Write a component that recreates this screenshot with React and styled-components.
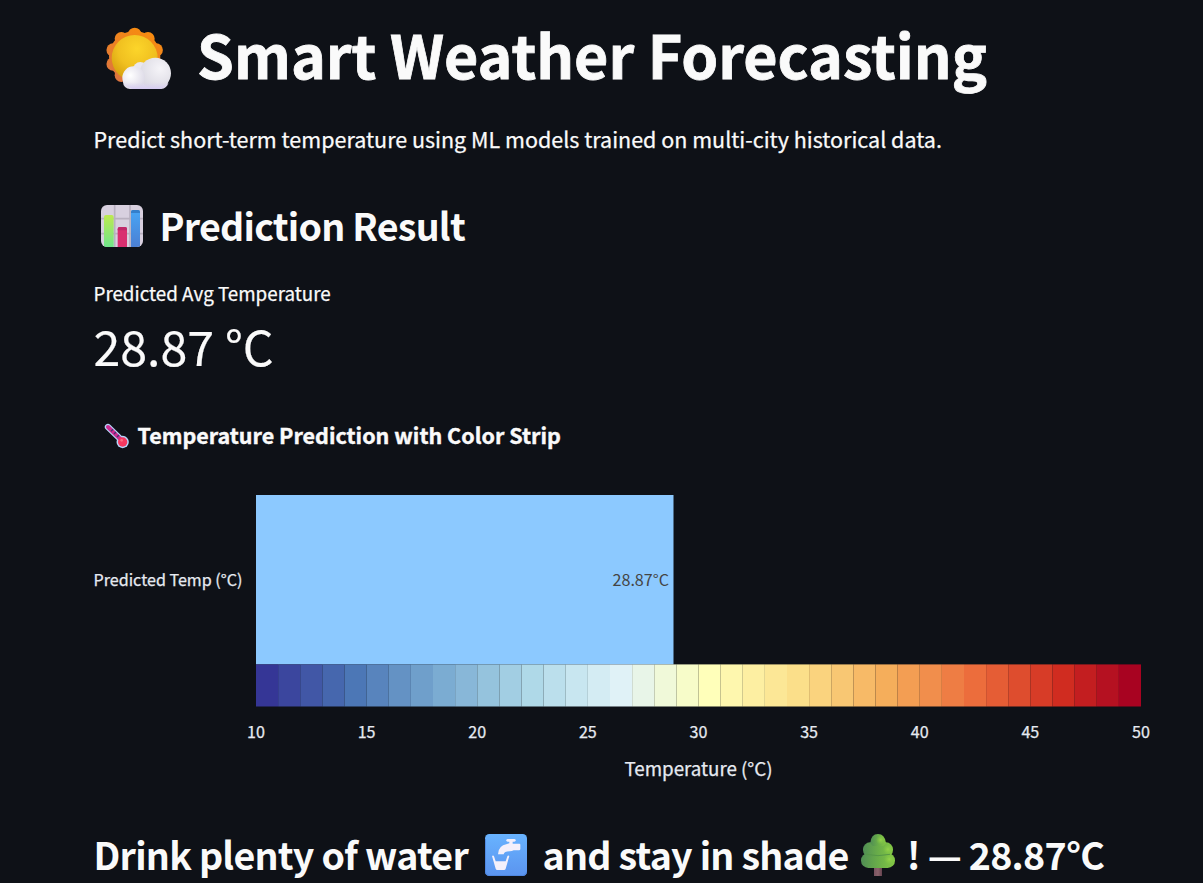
import React from "react";
import styled, { createGlobalStyle } from "styled-components";

const FONT = '"Noto Sans CJK SC", "Noto Sans", sans-serif';

const GlobalStyle = createGlobalStyle`
  * { box-sizing: border-box; }
  html, body { margin: 0; background: #0e1117; }
  body { overflow: hidden; }
`;

const Page = styled.main`
  display: flex;
  flex-direction: column;
  width: 1203px;
  height: 883px;
  padding: 13px 40px 0 93.5px;
  overflow: hidden;
  background: #0e1117;
  color: #fafafa;
  font-family: ${FONT};
  white-space: nowrap;
`;

const Heading = styled.div`
  display: flex;
  align-items: center;
  flex: none;
  height: ${(p) => p.$height}px;
  margin-top: ${(p) => p.$top || 0}px;
  padding-left: ${(p) => p.$indent || 0}px;
`;

const Title = styled.h1`
  margin: 0 0 0 24.5px;
  font-size: 59.1px;
  line-height: 80px;
  font-weight: 700;
  letter-spacing: 0.02px;
  -webkit-text-stroke: 0.8px currentColor;
`;

const Subtitle = styled.h3`
  margin: 0 0 0 ${(p) => p.$gap || 0}px;
  font-size: 37.6px;
  line-height: 50px;
  font-weight: 600;
  letter-spacing: -0.76px;
`;

const ChartTitle = styled.h4`
  margin: 0 0 0 8px;
  font-size: 21.5px;
  line-height: 30px;
  font-weight: 700;
  letter-spacing: 0.01px;
  -webkit-text-stroke: 0.4px currentColor;
`;

const Intro = styled.p`
  margin: 31px 0 0;
  font-size: 21.5px;
  line-height: 30px;
  -webkit-text-stroke: 0.25px currentColor;
`;

const MetricLabel = styled.div`
  margin-top: 30px;
  font-size: 18.8px;
  line-height: 26px;
  -webkit-text-stroke: 0.25px currentColor;
`;

const MetricValue = styled.div`
  margin-top: 7px;
  font-size: 48.3px;
  line-height: 64px;
  -webkit-text-stroke: 0.2px currentColor;
`;

const Icon = styled.svg`
  display: block;
  flex: none;
  margin-top: ${(p) => p.$drop || 0}px;
`;

const Chart = styled.svg`
  display: block;
  flex: none;
  margin-top: 30px;
  margin-left: 0.5px;
  font-family: ${FONT};
  fill: #e6eaf1;
`;

const AxisText = styled.text`
  font-size: ${(p) => p.$size || 16.1}px;
  stroke: #e6eaf1;
  stroke-width: 0.25px;
`;

const SunCloud = () => (
  <Icon $drop={10} width="70" height="66.67" viewBox="40 30 210 200">
    <defs>
      <radialGradient id="sun" cx=".55" cy=".3" r=".75">
        <stop stopColor="#fcd52a" /><stop offset=".55" stopColor="#f0c020" /><stop offset="1" stopColor="#d29c0c" />
      </radialGradient>
      <linearGradient id="rays" gradientUnits="userSpaceOnUse" x1="180" y1="40" x2="90" y2="205">
        <stop stopColor="#f98d0c" /><stop offset="1" stopColor="#dc7440" />
      </linearGradient>
      <radialGradient id="puff" cx=".35" cy=".4" r=".7">
        <stop stopColor="#ffffff" /><stop offset="1" stopColor="#dcd9e6" />
      </radialGradient>
      <radialGradient id="puffBig" cx=".65" cy=".35" r=".75">
        <stop stopColor="#f5f4f8" /><stop offset="1" stopColor="#d9d7e1" />
      </radialGradient>
      <linearGradient id="cloudBase" x1="0" y1="0" x2="0" y2="1">
        <stop offset=".4" stopColor="#dcd5ee" stopOpacity="0" /><stop offset="1" stopColor="#d6cbf3" />
      </linearGradient>
    </defs>
    <g fill="url(#rays)">
      <circle cx="135" cy="125" r="77" />
      {Array.from({ length: 10 }, (_, i) => {
        const a = ((i * 36 - 90) * Math.PI) / 180;
        return <circle key={i} cx={135 + 68 * Math.cos(a)} cy={126 + 68 * Math.sin(a)} r="20" />;
      })}
    </g>
    <circle cx="135" cy="129" r="69" fill="url(#sun)" />
    <circle cx="152" cy="163" r="22" fill="#e9e7ee" />
    <rect x="100" y="180" width="135" height="42" rx="21" fill="#dfdce9" />
    <circle cx="197" cy="175" r="47" fill="url(#puffBig)" />
    <circle cx="132" cy="188" r="34" fill="url(#puff)" />
    <path d="M98 188h146q-2 25-32 34h-84q-28-8-30-34z" fill="url(#cloudBase)" />
  </Icon>
);

const BarsIcon = () => (
  <Icon $drop={2} width="42" height="42" viewBox="0 0 126 126">
    <defs>
      <linearGradient id="green" x1="0" y1="0" x2="0" y2="1"><stop stopColor="#bde950" /><stop offset="1" stopColor="#70e58b" /></linearGradient>
      <linearGradient id="blue" x1="0" y1="0" x2="0" y2="1"><stop stopColor="#48a6f5" /><stop offset="1" stopColor="#4b7fd3" /></linearGradient>
      <clipPath id="tile"><rect width="126" height="126" rx="18" /></clipPath>
    </defs>
    <g clipPath="url(#tile)">
      <rect width="126" height="126" fill="#d8d0df" />
      <path d="M41 0v126M87 0v126M0 41h126M0 86h126" stroke="#b9b1c0" strokeWidth="5" />
      <path d="M9 126V36q0-6 6-6h17q6 0 6 6v90z" fill="url(#green)" />
      <path d="M50 126V72q0-6 6-6h16q6 0 6 6v54z" fill="#d92f70" />
      <path d="M50 76v-4q0-6 6-6h16q6 0 6 6v4z" fill="#bf2869" />
      <path d="M90 126V21q0-6 6-6h15q6 0 6 6v105z" fill="url(#blue)" />
      <path d="M90 24v-3q0-6 6-6h15q6 0 6 6v3z" fill="#347fcb" />
    </g>
  </Icon>
);

const Thermometer = () => (
  <Icon $drop={2} width="26" height="26" viewBox="41 39 78 78">
    <path d="M53 51L91 88" stroke="#b5d6fb" strokeWidth="19" strokeLinecap="round" />
    <circle cx="97" cy="96" r="18.5" fill="#b5d6fb" />
    <path d="M53 51L91 88" stroke="#cc2b91" strokeWidth="12" strokeLinecap="round" />
    <path d="M68 58l-6 6M77 66l-6 6M86 75l-6 6" stroke="#46316f" strokeWidth="4" />
    <circle cx="97" cy="96" r="14" fill="#f5375f" />
    <circle cx="94" cy="91" r="4" fill="#fb6c81" />
  </Icon>
);

const TapIcon = () => (
  <Icon $drop={2} width="42" height="42" viewBox="42 27 126 126">
    <defs>
      <linearGradient id="tap" x1="0" y1="0" x2="0" y2="1"><stop stopColor="#68b3ff" /><stop offset="1" stopColor="#5b94ef" /></linearGradient>
    </defs>
    <rect x="42" y="27" width="126" height="126" rx="13" fill="url(#tap)" />
    <path d="M43 42v98q0 11 12 12h99q12 0 13-12" fill="none" stroke="#4c84dc" strokeWidth="3" />
    <g fill="#f4f0fb">
      <rect x="106" y="42" width="28" height="8" rx="4" />
      <path d="M115 48h10v8h20q3 0 3 3v13q0 4-4 4h-16q-5 3-12 3-17 0-18 9h-17q0-26 27-31l7-2z" />
      <path d="M63 93q4-3 6 1l5 15h30l5-15q2-4 6-1l-11 38q-1 4-5 4H79q-4 0-5-4z" />
    </g>
  </Icon>
);

const TreeIcon = () => (
  <Icon $drop={2} width="36" height="44" viewBox="60 24 108 132">
    <defs>
      <linearGradient id="leaf"><stop stopColor="#508e54" /><stop offset=".5" stopColor="#69ad49" /><stop offset="1" stopColor="#83c744" /></linearGradient>
      <radialGradient id="leafGlow"><stop stopColor="#93d34b" /><stop offset="1" stopColor="#83c744" stopOpacity="0" /></radialGradient>
      <linearGradient id="trunk"><stop stopColor="#785360" /><stop offset=".5" stopColor="#8a626b" /><stop offset="1" stopColor="#65434f" /></linearGradient>
    </defs>
    <rect x="102" y="120" width="24" height="33" fill="url(#trunk)" />
    <rect x="63" y="84" width="102" height="45" rx="22" fill="url(#leaf)" />
    <rect x="69" y="52" width="90" height="44" rx="21" fill="url(#leaf)" />
    <path d="M91 54q2-27 23-27 20 0 24 27l-8 9H98z" fill="url(#leaf)" />
    <path d="M78 88q36 8 72 0" stroke="#559747" strokeWidth="3" fill="none" />
    <circle cx="122" cy="45" r="14" fill="url(#leafGlow)" />
    <circle cx="144" cy="73" r="15" fill="url(#leafGlow)" />
    <circle cx="148" cy="103" r="16" fill="url(#leafGlow)" />
  </Icon>
);

const STOPS = [
  [53, 54, 150], [76, 119, 182], [123, 172, 210], [175, 217, 232], [224, 242, 247], [255, 255, 186],
  [251, 223, 138], [245, 174, 91], [236, 109, 60], [208, 44, 32], [168, 3, 33],
];

// Four one-degree steps separate neighbouring stops, three before the last.
const stripColor = (i) => {
  const pos = i <= 36 ? i / 4 : 9 + (i - 36) / 3;
  const k = Math.min(9, Math.floor(pos));
  const t = pos - k;
  return `rgb(${STOPS[k].map((c, n) => Math.round(c + (STOPS[k + 1][n] - c) * t)).join(",")})`;
};

const X0 = 162;
const STEP = 22.125;
const PREDICTED = 28.87;

const TemperatureChart = () => (
  <Chart width="1069" height="320" viewBox="0 0 1069 320">
    <rect x={X0} y="15" width={(PREDICTED - 10) * STEP} height="169.4" fill="#8cc9ff" />
    {Array.from({ length: 40 }, (_, i) => (
      <rect key={i} x={X0 + i * STEP} y="184.4" width={STEP} height="42.1" fill={stripColor(i)} />
    ))}
    <AxisText x="-0.5" y="106" textLength="149">Predicted Temp (°C)</AxisText>
    <text x="575" y="106" fontSize="16.1" textAnchor="end" textLength="56.5" fill="#444">28.87°C</text>
    {[10, 15, 20, 25, 30, 35, 40, 45, 50].map((t) => (
      <AxisText key={t} x={X0 + (t - 10) * STEP} y="258" textAnchor="middle">{t}</AxisText>
    ))}
    <AxisText $size={18.8} x="604.5" y="296" textAnchor="middle" textLength="148">Temperature (°C)</AxisText>
  </Chart>
);

export default function App() {
  return (
    <>
      <GlobalStyle />
      <Page>
        <Heading $height={80} $indent={9}>
          <SunCloud />
          <Title>Smart Weather Forecasting</Title>
        </Heading>
        <Intro>Predict short-term temperature using ML models trained on multi-city historical data.</Intro>
        <Heading $height={50} $top={46} $indent={7.5}>
          <BarsIcon />
          <Subtitle $gap={16.5}>Prediction Result</Subtitle>
        </Heading>
        <MetricLabel>Predicted Avg Temperature</MetricLabel>
        <MetricValue>28.87 °C</MetricValue>
        <Heading $height={30} $top={43} $indent={10}>
          <Thermometer />
          <ChartTitle>Temperature Prediction with Color Strip</ChartTitle>
        </Heading>
        <TemperatureChart />
        <Heading $height={50} $top={29}>
          <Subtitle>Drink plenty of water</Subtitle>
          <Heading $height={50} $indent={16.5}><TapIcon /></Heading>
          <Subtitle $gap={16}>and stay in shade</Subtitle>
          <Heading $height={50} $indent={11.2}><TreeIcon /></Heading>
          <Subtitle $gap={11}>! — 28.87°C</Subtitle>
        </Heading>
      </Page>
    </>
  );
}
